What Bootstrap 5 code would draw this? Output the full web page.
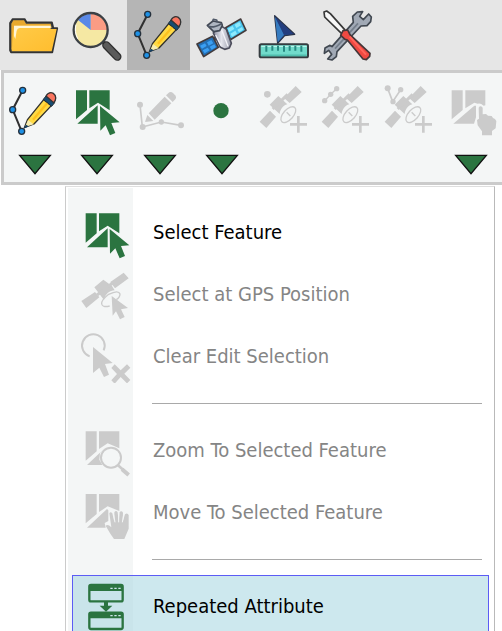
<!DOCTYPE html>
<html lang="en">
<head>
<meta charset="utf-8">
<meta name="viewport" content="width=device-width, initial-scale=1">
<title>Edit tools</title>
<link href="https://cdn.jsdelivr.net/npm/bootstrap@5.3.0/dist/css/bootstrap.min.css" rel="stylesheet">
<style>
  body { font-family: "DejaVu Sans Condensed", "Noto Sans", sans-serif; background: #fff; }
  .mainbar { background: #e6e6e6; height: 70px; padding-left: 1px; }
  .mainbar button { width: 63px; background: none; }
  .mainbar button.active { background: #b5b5b5; }
  .toolstrip { background: #f4f6f6; border: solid #cbcbcb; border-width: 3px 0 3px 3px; margin-left: 1px; padding: 11px 0 6px; }
  .toolcell { flex: 1 1 0; min-width: 0; gap: 16px; }
  .plainbtn { border: 0; padding: 0; background: none; line-height: 0; }
  .toolicon { width: 56px; height: 54px; }
  .arrowicon { width: 34px; height: 22px; }
  .editmenu { margin: 1px 7px 0 65px; border: 1px solid #b9b9b9; border-left-color: #cbcbcb; border-top-color: #dedede; padding: 14px 5px 14px 6px;
    background: linear-gradient(#f4f6f6, #f4f6f6) 2px 1px / 65px 100% no-repeat #fff; }
  .editmenu .dropdown-item { height: 62px; padding: 0 6px; gap: 20px; border: 1px solid transparent; font-size: 20px; line-height: 24px; color: #000; }
  .editmenu .dropdown-item:hover, .editmenu .dropdown-item:focus { background: none; }
  .editmenu .dropdown-item:disabled { color: #858585; }
  .editmenu .dropdown-item.picked { background: rgba(172, 216, 227, .6); border-color: #5c5cf5; }
  .editmenu svg { width: 54px; height: 54px; flex: none; }
  .editmenu hr { margin: 16px 7px 15px 80px; border-top: 1px solid #a9a9a9; opacity: 1; }
  .green { fill: #2b7440; color: #2b7440; }
  .gray { fill: #cbcbcb; color: #cbcbcb; }
</style>
<script src="https://cdn.jsdelivr.net/npm/bootstrap@5.3.0/dist/js/bootstrap.bundle.min.js"></script>
</head>
<body class="vh-100 overflow-hidden">
<svg width="0" height="0" class="position-absolute" aria-hidden="true">
  <defs>
    <linearGradient id="folderfill" x1="0" y1="0" x2="1" y2="1"><stop offset="0" stop-color="#ffcb49"/><stop offset="1" stop-color="#ffbd2e"/></linearGradient>
    <linearGradient id="metal"><stop offset="0" stop-color="#8d8f9f"/><stop offset=".45" stop-color="#e3e4ec"/><stop offset="1" stop-color="#9496a6"/></linearGradient>
    <symbol id="pencil" viewBox="21 42 168 162">
      <path d="M68 61 38 119 65 184" fill="none" stroke="#303030" stroke-width="6"/>
      <g fill="#1e91e6" stroke="#24303c" stroke-width="4"><circle cx="68" cy="61" r="9"/><circle cx="38" cy="119" r="9"/><circle cx="65" cy="184" r="9"/></g>
      <path d="M73 173 83 148 131 89 154 107 102 162Z" fill="#ffda45" stroke="#30302c" stroke-width="4" stroke-linejoin="round"/>
      <path d="M99 149 142 99" stroke="#ffc21e" stroke-width="7"/>
      <path d="M75 171 84 150 101 163Z" fill="#f7edb1"/>
      <path d="M71 176 78 164 86 169Z" fill="#123d61"/>
      <path d="M130 88 138 78 164 98 155 109Z" fill="#174d73" stroke="#202e3a" stroke-width="3"/>
      <path d="M138 78C145 67 152 66 160 70 170 77 169 90 161 98Z" fill="#f9755f" stroke="#333" stroke-width="4"/>
    </symbol>
    <symbol id="selectmap" viewBox="208 42 168 162">
      <path d="M229 61H262V120L229 148ZM269 61H330V121L295 98 269 115ZM233 161 294 106V161ZM301 108 360 157 335 159 347 189 331 196 318 166 302 182Z"/>
    </symbol>
    <symbol id="satplus" viewBox="198 42 168 162">
      <path d="M239 104 265 78 292 103C279 107 271 117 269 132ZM282 84 317 48 335 66 299 99ZM209 155 240 122 258 140 229 174Z"/>
      <path d="M248 117 293 73" stroke="currentColor" stroke-width="9"/>
      <ellipse cx="295" cy="134" rx="15" ry="29" transform="rotate(42 295 134)" fill="none" stroke="currentColor" stroke-width="4"/>
      <path d="M325 138V188M300 163H351" stroke="currentColor" stroke-width="8"/>
      <path d="M290 127 301 138" stroke="currentColor" stroke-width="4"/>
    </symbol>
  </defs>
</svg>

<nav class="mainbar d-flex" aria-label="Main">
  <button class="plainbtn" aria-label="Open"><svg class="toolicon" viewBox="14 24 168 162">
    <path d="M29 151V69L37 57H73L79 67H155L159 84H171L156 157H32Z" fill="#39434e" stroke="#333" stroke-width="5" stroke-linejoin="round"/>
    <path d="M33 148V71L39 61H71L77 71H151L154 84H50L34 151Z" fill="#e9a92e"/>
    <path d="M42 77H151V87H169L154 154H34L38 102Z" fill="url(#folderfill)"/>
    <path d="M41 108V77H151V84H58Q51 85 49 92L45 117Z" fill="#fff5d6"/>
  </svg></button>
  <button class="plainbtn" aria-label="Identify"><svg class="toolicon" viewBox="202 24 168 162">
    <path d="M302 120 318 137" stroke="#444" stroke-width="12"/>
    <path d="M317 136 350 170" stroke="#2e2e2e" stroke-width="25" stroke-linecap="round"/><path d="M317 136 350 170" stroke="#5b5b5b" stroke-width="17" stroke-linecap="round"/>
    <circle cx="270" cy="90" r="49" fill="#f5e8a3"/><path d="M270 90V41A49 49 0 0 1 319 90Z" fill="#fb9c84"/><path d="M270 90V41A49 49 0 0 0 232 60Z" fill="#5988e7"/>
    <circle cx="270" cy="90" r="51" fill="none" stroke="#3b4045" stroke-width="7"/><path d="M231 116C224 102 222 87 226 74" fill="none" stroke="#fff" stroke-width="3"/>
  </svg></button>
  <button class="plainbtn active" aria-label="Edit" aria-pressed="true"><svg class="toolicon" viewBox="18 27 168 162"><use href="#pencil" x="21" y="27" width="168" height="162"/></svg></button>
  <button class="plainbtn" aria-label="GPS"><svg class="toolicon" viewBox="10 24 168 162" stroke-linejoin="round">
    <path d="M67 119 117 95" stroke="#444" stroke-width="11"/>
    <g stroke="#433b3c" stroke-width="5"><path d="M19 132 66 109 83 142 39 170Z" fill="#246fb4"/><path d="M105 83 150 57 166 91 119 119Z" fill="#4bc5ee"/></g>
    <path d="M28 137 43 130 48 138 34 146ZM49 127 62 120 68 130 54 137ZM36 151 51 143 57 151 42 160ZM57 140 71 133 76 141 63 149Z" fill="#3b9ff3"/>
    <path d="M111 86 126 78 131 87 116 96ZM132 74 146 66 151 76 137 84ZM119 101 134 92 139 101 124 110ZM140 89 154 81 158 89 145 97Z" fill="#8deafd"/>
    <path d="M68 99 76 86 95 80 107 88 122 130 116 144 102 148 89 142Z" fill="url(#metal)" stroke="#4c4d5c" stroke-width="5"/>
    <path d="M75 105 91 137M91 85 112 139" stroke="#f2f2f8" stroke-width="4"/>
    <path d="M50 76 67 63 92 68 95 76 87 92 69 95Z" fill="#aeb5c1" stroke="#424854" stroke-width="5"/><path d="M52 78Q64 86 93 71M66 63 68 58 78 60 80 67" fill="none" stroke="#505968" stroke-width="5"/>
  </svg></button>
  <button class="plainbtn" aria-label="Measure"><svg class="toolicon" viewBox="200 24 168 162">
    <path d="M253 47 313 103 283 107 262 130Z" fill="#244e95" stroke="#293247" stroke-width="4" stroke-linejoin="round"/><path d="M254 50 281 104 262 126Z" fill="#367bc0"/><path d="M254 50 281 104 310 102Z" fill="#233d7e"/>
    <rect x="208" y="133" width="145" height="39" rx="5" fill="#71dbcb" stroke="#353c40" stroke-width="6"/>
    <path d="M213 139H349" stroke="#b8f5eb" stroke-width="4"/><path d="M213 166H349" stroke="#50bdad" stroke-width="5"/>
    <path d="M228 137V155M246 137V152M263 137V152M281 137V155M298 137V152M315 137V152M333 137V155" stroke="#278981" stroke-width="6"/>
  </svg></button>
  <button class="plainbtn" aria-label="Settings"><svg class="toolicon" viewBox="388 24 168 162" stroke-linejoin="round">
    <path d="M400 36 408 33 419 41 462 89 453 101 402 51Z" fill="#f7f7f7" stroke="#373737" stroke-width="5"/>
    <path d="M403 144 418 136 424 140 488 67 486 49 500 36 516 35 507 49 518 59 534 42 542 51 540 65 529 77 511 78 439 155 437 170 424 180 411 177 423 163 414 151 401 160Z" fill="#a1a9b5" stroke="#414851" stroke-width="5"/>
    <path d="M433 146 502 70" stroke="#747e8b" stroke-width="5"/>
    <path d="M450 106 457 92 471 90 478 104 538 160 537 169 527 179 517 177 470 120 463 118Z" fill="#ef4942" stroke="#443638" stroke-width="5"/><path d="M477 110 526 164" stroke="#ff655a" stroke-width="6"/>
  </svg></button>
</nav>

<div class="toolstrip d-flex" role="toolbar" aria-label="Editing">
  <div class="toolcell d-flex flex-column align-items-center">
    <button class="plainbtn" aria-label="Edit geometry"><svg class="toolicon"><use href="#pencil"/></svg></button>
    <button class="plainbtn" aria-label="Edit geometry options"><svg class="arrowicon" viewBox="51 252 102 66"><path id="tri" d="M56 256H148L102 311Z" fill="#2b7440" stroke="#111" stroke-width="4"/></svg></button>
  </div>
  <div class="toolcell d-flex flex-column align-items-center">
    <button class="plainbtn" aria-label="Select feature"><svg class="toolicon green"><use href="#selectmap"/></svg></button>
    <button class="plainbtn" aria-label="Select options" aria-expanded="true"><svg class="arrowicon" viewBox="51 252 102 66"><use href="#tri"/></svg></button>
  </div>
  <div class="toolcell d-flex flex-column align-items-center">
    <button class="plainbtn" aria-label="Sketch line"><svg class="toolicon gray" viewBox="395 42 168 162">
      <path d="M419 104 426 171 483 156 542 166" fill="none" stroke="currentColor" stroke-width="5"/><circle cx="419" cy="104" r="9"/><circle cx="427" cy="171" r="9"/><circle cx="483" cy="156" r="8"/><circle cx="542" cy="166" r="9"/>
      <path d="M441 135 459 153 434 156ZM445 130 493 80 513 100 463 149ZM497 76 507 67Q513 64 518 69L526 77Q529 83 525 88L517 96Z"/></svg></button>
    <button class="plainbtn" aria-label="Sketch options"><svg class="arrowicon" viewBox="51 252 102 66"><use href="#tri"/></svg></button>
  </div>
  <div class="toolcell d-flex flex-column align-items-center">
    <button class="plainbtn" aria-label="Point"><svg class="toolicon green" viewBox="12 42 168 162"><circle cx="93" cy="122" r="23"/></svg></button>
    <button class="plainbtn" aria-label="Point options"><svg class="arrowicon" viewBox="51 252 102 66"><use href="#tri"/></svg></button>
  </div>
  <div class="toolcell d-flex flex-column align-items-center">
    <button class="plainbtn" aria-label="Add GPS point"><svg class="toolicon gray" viewBox="0 0 168 162"><use href="#satplus" width="168" height="162"/><circle cx="34" cy="31" r="10"/></svg></button>
  </div>
  <div class="toolcell d-flex flex-column align-items-center">
    <button class="plainbtn" aria-label="Add GPS points along line"><svg class="toolicon gray" viewBox="0 0 168 162"><use href="#satplus" width="168" height="162"/><path d="M20 50 38 31 56 14" stroke="currentColor" stroke-width="4"/><circle cx="20" cy="50" r="8"/><circle cx="38" cy="31" r="8"/><circle cx="56" cy="14" r="8"/></svg></button>
  </div>
  <div class="toolcell d-flex flex-column align-items-center">
    <button class="plainbtn" aria-label="Add GPS vertex"><svg class="toolicon gray" viewBox="0 0 168 162"><use href="#satplus" width="168" height="162"/><path d="M20 13 35 53 59 17" fill="none" stroke="currentColor" stroke-width="5"/><circle cx="20" cy="13" r="9"/><circle cx="36" cy="53" r="8"/><circle cx="59" cy="17" r="8"/></svg></button>
  </div>
  <div class="toolcell d-flex flex-column align-items-center">
    <button class="plainbtn" aria-label="Touch select"><svg class="toolicon gray" viewBox="309 42 168 162">
      <path d="M335 61H368V120L335 148ZM376 61H436V106L431 107Q421 98 413 101L403 98 376 115ZM340 161 403 107H408V142L402 161Z"/><path d="M416 113Q421 105 428 113V133L438 132 444 137 455 138 459 144Q466 146 469 153L467 175 456 183V196H426V184L413 166 411 150 417 146Z"/></svg></button>
    <button class="plainbtn" aria-label="Touch select options"><svg class="arrowicon" viewBox="51 252 102 66"><use href="#tri"/></svg></button>
  </div>
</div>

<div class="editmenu" role="menu">
  <button class="dropdown-item d-flex align-items-center" role="menuitem">
    <svg class="green" viewBox="57 75 162 162"><path d="M77 100H110V160L77 188ZM117 100H178V160L143 137 117 154ZM81 202 143 145V202ZM149 147 208 196 183 198 195 228 179 235 166 205 150 221Z"/></svg>
    <span>Select Feature</span></button>
  <button class="dropdown-item d-flex align-items-center" role="menuitem" disabled>
    <svg class="gray" viewBox="57 261 162 162"><path d="M103 322 130 299 156 318 164 331C149 332 136 341 132 360ZM151 306 191 278 206 295 165 325ZM64 363 105 336 118 352 79 384Z"/><path d="M111 345 158 309" stroke="currentColor" stroke-width="9"/><path d="M149 378Q127 383 125 372T146 343Q176 329 180 342 180 352 169 359" fill="none" stroke="currentColor" stroke-width="4"/><path d="M155 348 204 384 183 388 194 411 180 418 168 394 158 407Z"/></svg>
    <span>Select at GPS Position</span></button>
  <button class="dropdown-item d-flex align-items-center" role="menuitem" disabled>
    <svg class="gray" viewBox="57 27 162 162"><path d="M89 109A34 34 0 1 1 131 91" fill="none" stroke="currentColor" stroke-width="6"/><path d="M99 81 158 129 135 132 147 164 132 171 118 143 99 159ZM154 144 164 133 182 151 201 133 211 143 193 161 211 180 201 190 182 171 164 191 154 181 171 162Z"/></svg>
    <span>Clear Edit Selection</span></button>
  <hr>
  <button class="dropdown-item d-flex align-items-center" role="menuitem" disabled>
    <svg class="gray" viewBox="57 12 162 162"><path d="M77 37H110V97L77 125ZM117 37H178V88L143 73 117 90ZM81 138 138 84 120 102 118 122 127 138Z"/><circle cx="153" cy="116" r="30" fill="#f4f6f6" stroke="currentColor" stroke-width="6"/><path d="M174 139 203 164" stroke="currentColor" stroke-width="8"/><path d="M186 151 206 168" stroke="currentColor" stroke-width="12"/></svg>
    <span>Zoom To Selected Feature</span></button>
  <button class="dropdown-item d-flex align-items-center" role="menuitem" disabled>
    <svg class="gray" viewBox="57 198 162 162"><path d="M77 225H110V285L77 313ZM117 225H178V276L143 262 117 279ZM81 326 141 270 145 274V306L134 312 137 326Z"/><path d="M137 320Q144 315 154 325L148 283Q151 276 157 283L163 309V280Q168 272 173 280L176 309 179 279Q185 274 189 281L188 309 195 286Q202 280 206 288V329L193 360H162L151 344Z"/><path d="M161 286 165 310M176 283V310M191 287 187 310" stroke="#f4f6f6" stroke-width="3"/></svg>
    <span>Move To Selected Feature</span></button>
  <hr>
  <button class="dropdown-item picked d-flex align-items-center" role="menuitem">
    <svg class="green" viewBox="57 90 162 162"><g fill="none" stroke="currentColor" stroke-width="7"><rect x="88" y="108" width="100" height="49" rx="5"/><rect x="88" y="191" width="100" height="49" rx="5"/></g><path d="M88 107H188V126H88ZM88 190H188V208H88ZM132 158H144V170H157L138 188 119 170H132Z"/><path d="M151 118H183M151 200H183" stroke="#cfe7ee" stroke-width="4" stroke-dasharray="7 5"/></svg>
    <span>Repeated Attribute</span></button>
</div>
</body>
</html>
